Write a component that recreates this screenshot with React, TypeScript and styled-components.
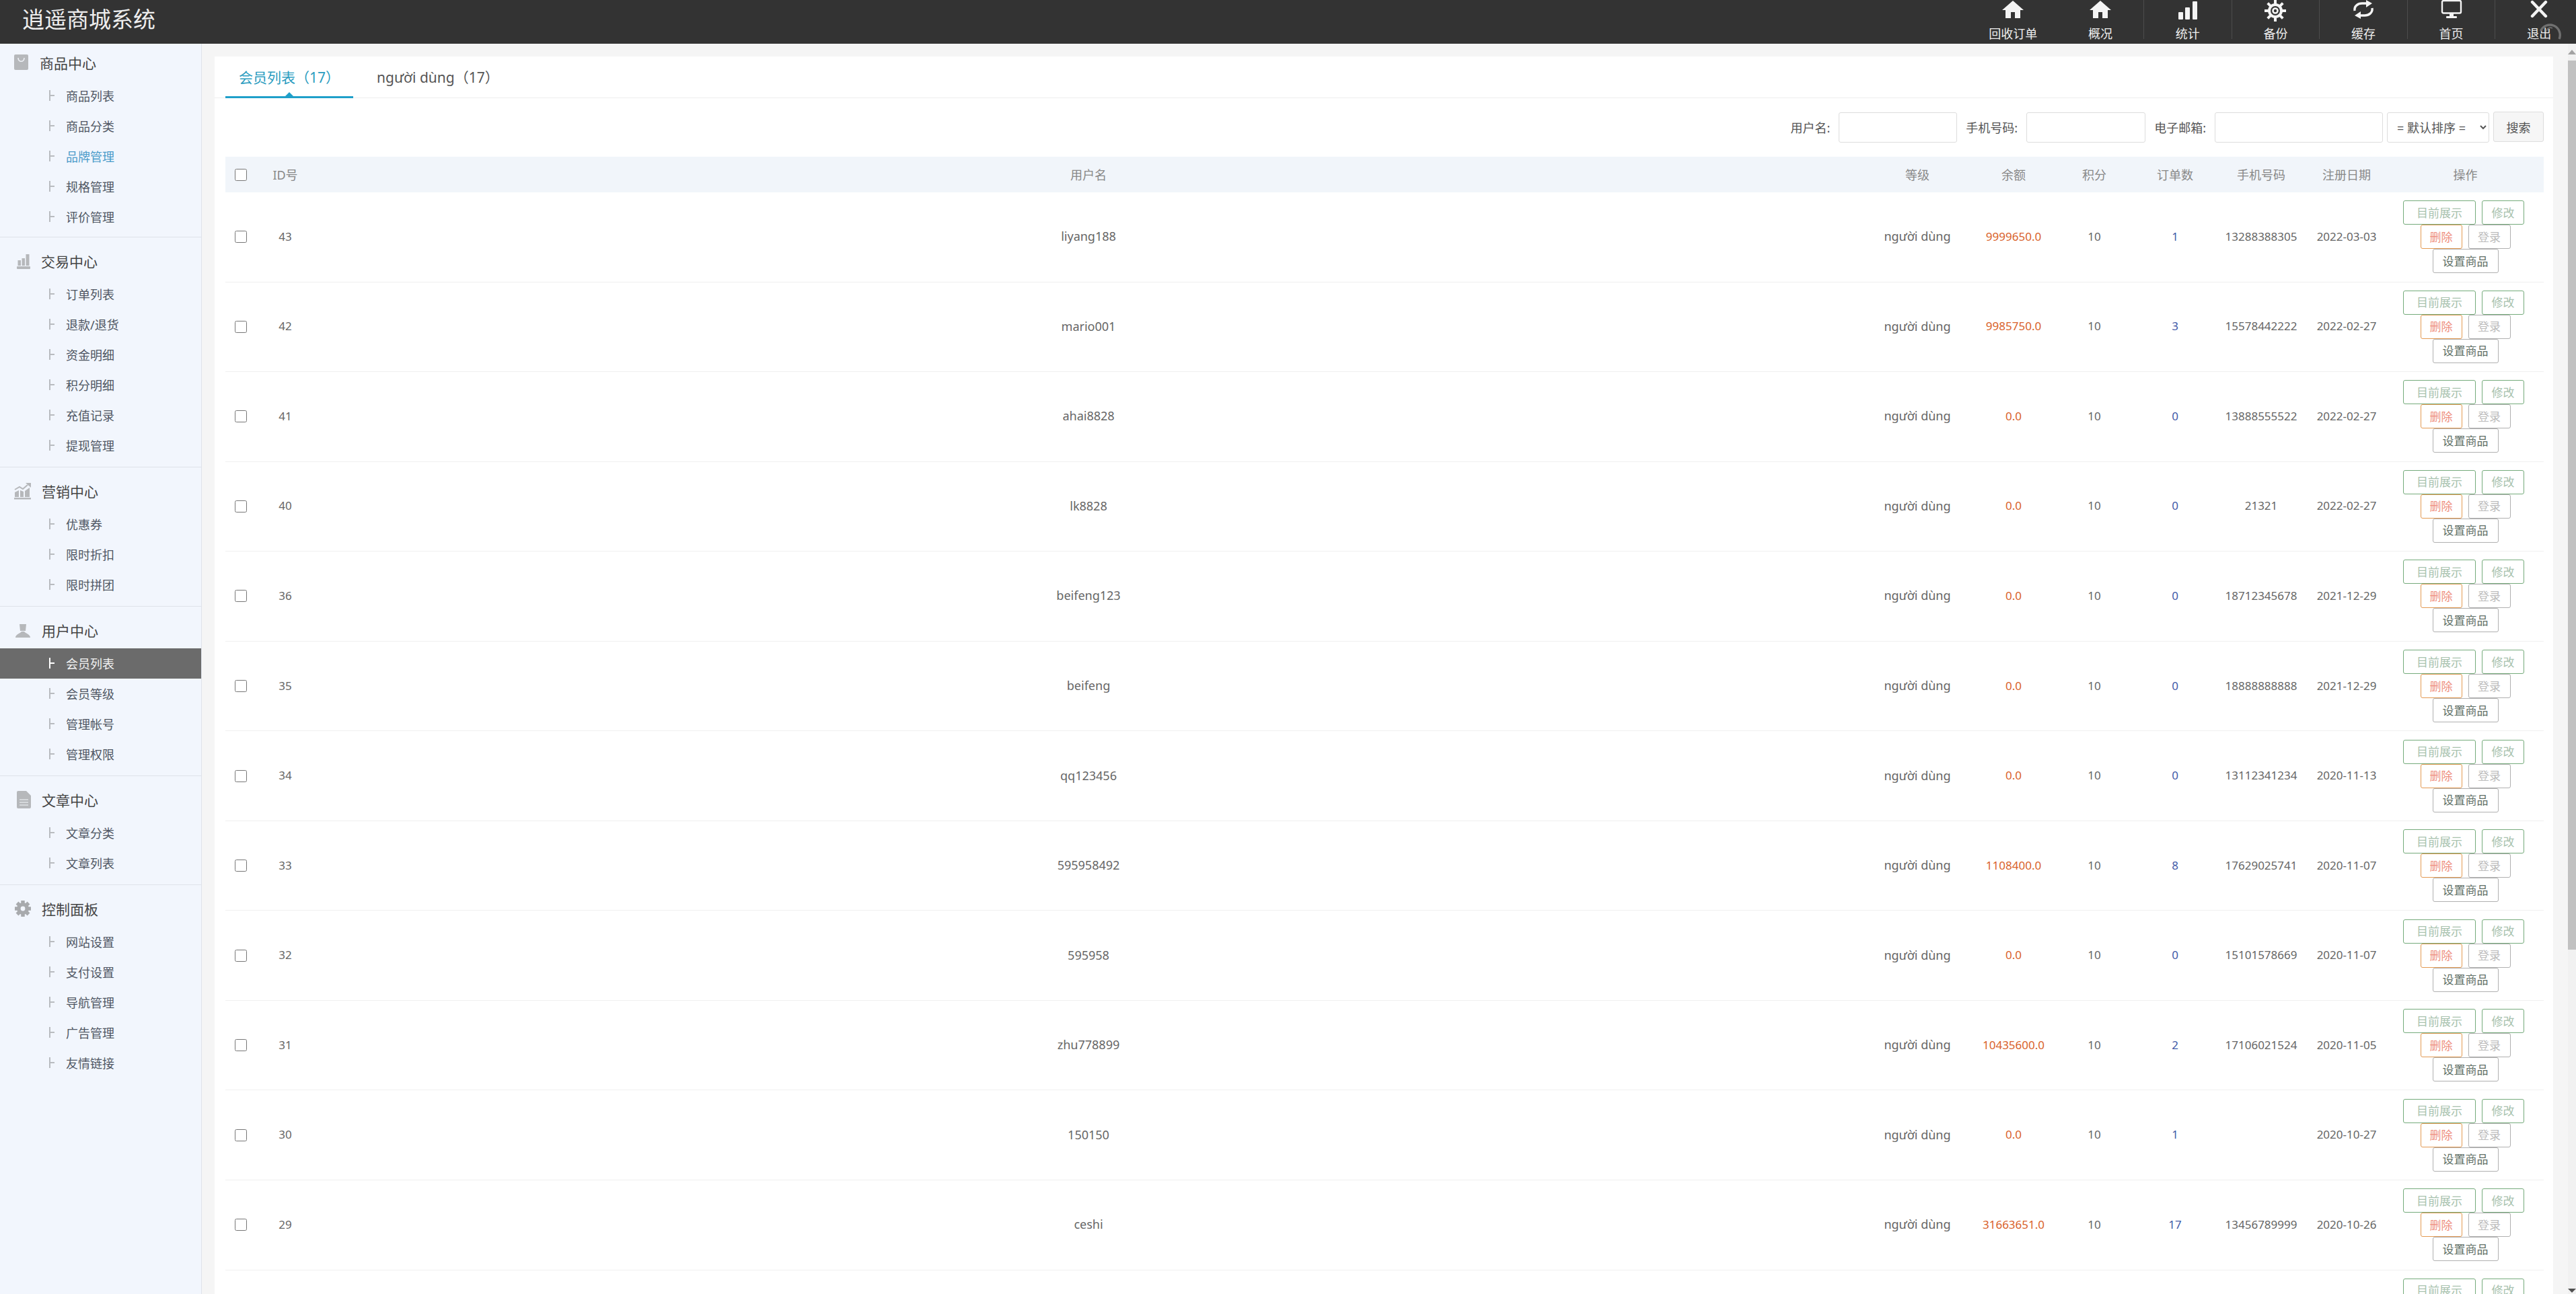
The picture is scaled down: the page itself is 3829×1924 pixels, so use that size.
import * as React from 'react';
import styled, { createGlobalStyle } from 'styled-components';

const fontStack = '"Noto Sans", "Noto Sans CJK SC", sans-serif';

const GlobalStyle = createGlobalStyle`
  html, body {
    margin: 0;
    height: 100%;
    overflow: hidden;
    background: #f5f5f5;
    font-family: ${fontStack};
  }
  * { box-sizing: border-box; }
`;

const Page = styled.div`
  display: flex;
  flex-direction: column;
  height: 100vh;
  overflow: hidden;
`;

const TopBar = styled.header`
  display: flex;
  flex: 0 0 65px;
  justify-content: space-between;
  background: #333;
  overflow: hidden;
`;

const Brand = styled.h1`
  margin: 0;
  padding: 4px 0 0 33px;
  color: #eee;
  font-size: 33px;
  font-weight: 400;
  line-height: 50px;
`;

const Nav = styled.nav`
  display: flex;
  align-items: flex-start;
  margin-right: -10px;
`;

const NavItem = styled.a<{ $divided?: boolean; $narrow?: boolean }>`
  position: relative;
  display: flex;
  flex-direction: column;
  align-items: center;
  width: ${(p) => (p.$narrow ? '129px' : '130.6px')};
  height: 58px;
  color: #eee;
  font-size: 18px;
  line-height: 24px;
  border-left: 1px solid ${(p) => (p.$divided ? '#4c4c4c' : 'transparent')};

  svg.nav-icon {
    flex: 0 0 32px;
    width: 34px;
    height: 32px;
    margin-bottom: 6px;
  }
`;

const Spinner = styled.svg`
  position: absolute;
  left: 64px;
  top: 32px;
  width: 36px;
  height: 36px;
`;

const Body = styled.div`
  display: flex;
  flex: 1;
  min-height: 0;
`;

const Sidebar = styled.aside`
  flex: 0 0 300px;
  background: #f2f6fd;
  border-right: 1px solid #dfe3ea;
`;

const Section = styled.section<{ $first?: boolean; $last?: boolean }>`
  padding: ${(p) => (p.$first ? '3px 0 7px' : '10px 0 9px')};
  border-bottom: ${(p) => (p.$last ? 'none' : '1px solid #dfe3ea')};
`;

const SectionTitle = styled.div<{ $gap: number }>`
  display: flex;
  align-items: center;
  gap: ${(p) => p.$gap}px;
  height: 52px;
  padding: 0 0 2px 21px;
  color: #444;
  font-size: 21px;

  svg {
    flex: 0 0 26px;
    width: 26px;
    height: 26px;
  }
`;

const TreeMark = styled.i`
  position: relative;
  display: block;
  flex: 0 0 8px;
  height: 16px;
  margin-right: 17px;
  border-left: 2px solid currentColor;

  &::after {
    content: '';
    position: absolute;
    left: 0;
    top: 7px;
    width: 6px;
    height: 2px;
    background: currentColor;
  }
`;

const MenuItem = styled.a<{ $active?: boolean; $accent?: boolean }>`
  display: flex;
  align-items: center;
  height: 45px;
  padding: 0 0 2px 73px;
  font-size: 18px;
  color: ${(p) => (p.$active ? '#f2f2f2' : p.$accent ? '#4a9bc9' : '#4f5663')};
  background: ${(p) => (p.$active ? '#6b6b6b' : 'transparent')};

  ${TreeMark} {
    color: ${(p) => (p.$active ? '#fff' : '#b9bcc0')};
  }
`;

const Main = styled.main`
  flex: 1;
  min-width: 0;
  padding: 19px 22px 0 19px;
  overflow: hidden;
`;

const Card = styled.div`
  background: #fff;
  min-height: 100%;
`;

const Tabs = styled.div`
  display: flex;
  height: 62px;
  padding-left: 16px;
  border-bottom: 1px solid #eee;
`;

const Tab = styled.a<{ $active?: boolean }>`
  position: relative;
  height: 62px;
  margin-right: 15px;
  padding: 14px 20px 0;
  font-size: 21px;
  line-height: 34px;
  color: ${(p) => (p.$active ? '#2a9cc0' : '#555')};
  border-bottom: 3px solid ${(p) => (p.$active ? '#1f9fc9' : 'transparent')};

  &::after {
    content: '';
    display: ${(p) => (p.$active ? 'block' : 'none')};
    position: absolute;
    left: 50%;
    bottom: 0;
    margin-left: -6px;
    border: 6px solid transparent;
    border-top: 0;
    border-bottom-color: #1f9fc9;
  }
`;

const Content = styled.div`
  padding: 21px 14px 0 16px;
`;

const FilterBar = styled.form`
  display: flex;
  justify-content: flex-end;
  align-items: center;
  height: 45px;
  margin-bottom: 21px;
  font-size: 18px;
  color: #555;
`;

const FilterLabel = styled.label`
  margin-right: 13px;
  padding-bottom: 2px;
`;

const TextInput = styled.input<{ $w: number }>`
  width: ${(p) => p.$w}px;
  height: 45px;
  margin-right: 13px;
  border: 1px solid #ddd;
  border-radius: 3px;
  background: #fff;
`;

const SortSelect = styled.select`
  width: 152px;
  height: 45px;
  margin: 0 6px 0 -7px;
  padding-left: 10px;
  border: 1px solid #ddd;
  border-radius: 3px;
  background: #fff;
  color: #555;
  font: 18px ${fontStack};
`;

const SearchButton = styled.button`
  width: 75px;
  height: 45px;
  margin-top: -2px;
  border: 1px solid #ddd;
  border-radius: 3px;
  background: #f6f6f6;
  color: #555;
  font: 18px ${fontStack};
`;

const gridColumns = '45px 88px 2300px 164px 122px 118px 122px 134px 120px 233px';

const HeadRow = styled.div`
  display: grid;
  grid-template-columns: ${gridColumns};
  align-items: center;
  justify-items: center;
  height: 53px;
  background: #f1f5fa;
  color: #888;
  font-size: 18px;

  span {
    padding-bottom: 2px;
  }
`;

const Row = styled.div`
  display: grid;
  grid-template-columns: ${gridColumns};
  align-items: center;
  justify-items: center;
  height: 133.55px;
  border-bottom: 1px solid #f0f0f0;
  color: #666;
  font-size: 17px;

  span {
    padding-bottom: 2px;
  }
`;

const NameCell = styled.span`
  font-size: 18px;
`;

const Check = styled.input.attrs({ type: 'checkbox' })`
  width: 18px;
  height: 18px;
  margin: 0;
`;

const Balance = styled.span`
  color: #d9622b;
`;

const Orders = styled.span`
  color: #3f5aa8;
`;

const Actions = styled.div`
  display: flex;
  flex-wrap: wrap;
  justify-content: center;
  column-gap: 9px;
  width: 100%;
`;

const toneStyles = {
  green: { border: '#75ab7b', color: '#a8c2ae' },
  orange: { border: '#e39a52', color: '#ee8f80' },
  gray: { border: '#b0b0b0', color: '#bcbcbc' },
  dark: { border: '#b0b0b0', color: '#5f6f66' }
};

const ActionButton = styled.button<{ $tone: keyof typeof toneStyles; $w: number; $trail?: boolean }>`
  width: ${(p) => p.$w}px;
  height: 36px;
  margin-right: ${(p) => (p.$trail ? '5px' : '0')};
  padding: 0 0 2px;
  background: #fff;
  border: 1px solid ${(p) => toneStyles[p.$tone].border};
  border-radius: 3px;
  color: ${(p) => toneStyles[p.$tone].color};
  font: 17px ${fontStack};
`;

const ScrollTrack = styled.div`
  display: flex;
  flex-direction: column;
  flex: 0 0 12px;
  background: #f1f1f1;
`;

const ScrollUp = styled.div`
  flex: 0 0 25px;
  display: flex;
  align-items: center;
  justify-content: center;

  &::before {
    content: '';
    border: 6px solid transparent;
    border-top: 0;
    border-bottom: 7px solid #a3a3a3;
  }
`;

const ScrollThumb = styled.div`
  flex: 0 0 1322px;
  background: #c1c1c1;
`;

const ScrollGap = styled.div`
  flex: 1;
`;

const ScrollDown = styled.div`
  flex: 0 0 10px;
  display: flex;
  align-items: center;
  justify-content: center;

  &::before {
    content: '';
    border: 6px solid transparent;
    border-bottom: 0;
    border-top: 6px solid #505050;
  }
`;

const ICON_GRAY = '#b6b8bb';

const BagIcon = () => (
  <svg viewBox="0 0 26 26">
    <rect x="0" y="1" width="21" height="23" rx="2" fill={ICON_GRAY} />
    <path d="M6 6c0 7 9 7 9 0" fill="none" stroke="#eef1f6" strokeWidth="1.6" />
  </svg>
);

const BarsIcon = () => (
  <svg viewBox="0 0 26 26" fill={ICON_GRAY}>
    <rect x="5.5" y="12" width="4.5" height="8" />
    <rect x="11.5" y="9" width="4.5" height="11" />
    <rect x="17.5" y="3" width="5" height="17" />
    <rect x="4" y="21" width="20" height="4" rx="1" />
  </svg>
);

const ChartIcon = () => (
  <svg viewBox="0 0 26 26" fill={ICON_GRAY}>
    <path d="M1 15l6-3v10H1zM9 12l5 2v8H9zM16 13l7-5v14h-7z" />
    <rect x="0" y="23" width="25" height="2.5" />
    <path d="M1 11l7-4 5 3 7-6" fill="none" stroke={ICON_GRAY} strokeWidth="2" />
    <path d="M17 1h8v7z" />
  </svg>
);

const PersonIcon = () => (
  <svg viewBox="0 0 26 26" fill={ICON_GRAY}>
    <path d="M8 4h10l-1 10h-8z" />
    <path d="M2 24c0-5 7-6 9-9h4c2 3 9 4 9 9z" />
  </svg>
);

const FileIcon = () => (
  <svg viewBox="0 0 26 26">
    <path
      d="M6 0h12l7 7v17a2 2 0 0 1-2 2H6a2 2 0 0 1-2-2V2a2 2 0 0 1 2-2z"
      fill={ICON_GRAY}
    />
    <path d="M8 13h13M8 17h13M8 21h13" stroke="#dfe2e6" strokeWidth="1.6" />
  </svg>
);

const GearIcon = ({ fill = '#a8aaad' }: { fill?: string }) => (
  <svg viewBox="0 0 26 26">
    <g stroke={fill} strokeWidth="5.5">
      <path d="M13 1v24M1 13h24M4.5 4.5l17 17M21.5 4.5l-17 17" />
    </g>
    <circle cx="13" cy="13" r="9" fill={fill} />
    <circle cx="13" cy="13" r="3.4" fill="#f2f6fd" />
  </svg>
);

const navIconColor = '#f4f4f4';

const HomeNavIcon = () => (
  <svg className="nav-icon" viewBox="0 0 34 32" fill={navIconColor}>
    <path d="M17 1l16 14h-5v12h-8v-9h-6v9H6V15H1z" />
  </svg>
);

const BarsNavIcon = () => (
  <svg className="nav-icon" viewBox="0 0 34 32" fill={navIconColor}>
    <rect x="3" y="18" width="7" height="11" rx="1" />
    <rect x="13" y="11" width="7" height="18" rx="1" />
    <rect x="24" y="2" width="7" height="27" rx="1" />
  </svg>
);

const GearNavIcon = () => (
  <svg className="nav-icon" viewBox="0 0 34 32">
    <g stroke={navIconColor} strokeWidth="4">
      <path d="M17 0v32M1 16h32M5.7 4.7l22.6 22.6M28.3 4.7L5.7 27.3" />
    </g>
    <circle cx="17" cy="16" r="11" fill={navIconColor} />
    <circle cx="17" cy="16" r="7" fill="#333" />
    <circle cx="17" cy="16" r="4.8" fill={navIconColor} />
    <circle cx="17" cy="16" r="2.2" fill="#333" />
  </svg>
);

const RefreshNavIcon = () => (
  <svg className="nav-icon" viewBox="0 0 34 32" fill={navIconColor}>
    <path
      d="M4 16C3 9 9 5 15 5h6M30 12c1 7-5 11-11 11h-6"
      fill="none"
      stroke={navIconColor}
      strokeWidth="3.4"
    />
    <path d="M21 0l9 5-9 6zM13 17l-9 6 9 5z" />
  </svg>
);

const MonitorNavIcon = () => (
  <svg className="nav-icon" viewBox="0 0 34 32" fill={navIconColor}>
    <rect x="3" y="1" width="28" height="18.5" rx="2" fill="none" stroke={navIconColor} strokeWidth="2.4" />
    <rect x="14" y="20" width="6" height="4" />
    <rect x="9" y="24" width="16" height="3" rx="1" />
  </svg>
);

const CloseNavIcon = () => (
  <svg className="nav-icon" viewBox="0 0 34 32">
    <path d="M7 3l20 21M27 3L7 24" stroke={navIconColor} strokeWidth="4.4" strokeLinecap="round" />
  </svg>
);

const navItems = [
  { label: '回收订单', icon: <HomeNavIcon /> },
  { label: '概况', icon: <HomeNavIcon />, narrow: true },
  { label: '统计', icon: <BarsNavIcon />, divided: true },
  { label: '备份', icon: <GearNavIcon />, divided: true },
  { label: '缓存', icon: <RefreshNavIcon />, divided: true },
  { label: '首页', icon: <MonitorNavIcon />, divided: true },
  { label: '退出', icon: <CloseNavIcon />, divided: true, spinner: true }
];

const menu = [
  { title: '商品中心', icon: <BagIcon />, gap: 12, items: ['商品列表', '商品分类', '品牌管理', '规格管理', '评价管理'] },
  { title: '交易中心', icon: <BarsIcon />, gap: 14, items: ['订单列表', '退款/退货', '资金明细', '积分明细', '充值记录', '提现管理'] },
  { title: '营销中心', icon: <ChartIcon />, gap: 15, items: ['优惠券', '限时折扣', '限时拼团'] },
  { title: '用户中心', icon: <PersonIcon />, gap: 15, items: ['会员列表', '会员等级', '管理帐号', '管理权限'] },
  { title: '文章中心', icon: <FileIcon />, gap: 15, items: ['文章分类', '文章列表'] },
  { title: '控制面板', icon: <GearIcon />, gap: 15, items: ['网站设置', '支付设置', '导航管理', '广告管理', '友情链接'] }
];

const members = [
  ['43', 'liyang188', '9999650.0', '1', '13288388305', '2022-03-03'],
  ['42', 'mario001', '9985750.0', '3', '15578442222', '2022-02-27'],
  ['41', 'ahai8828', '0.0', '0', '13888555522', '2022-02-27'],
  ['40', 'lk8828', '0.0', '0', '21321', '2022-02-27'],
  ['36', 'beifeng123', '0.0', '0', '18712345678', '2021-12-29'],
  ['35', 'beifeng', '0.0', '0', '18888888888', '2021-12-29'],
  ['34', 'qq123456', '0.0', '0', '13112341234', '2020-11-13'],
  ['33', '595958492', '1108400.0', '8', '17629025741', '2020-11-07'],
  ['32', '595958', '0.0', '0', '15101578669', '2020-11-07'],
  ['31', 'zhu778899', '10435600.0', '2', '17106021524', '2020-11-05'],
  ['30', '150150', '0.0', '1', '', '2020-10-27'],
  ['29', 'ceshi', '31663651.0', '17', '13456789999', '2020-10-26']
];

const RowActions = () => (
  <Actions>
    <ActionButton $tone="green" $w={108}>目前展示</ActionButton>
    <ActionButton $tone="green" $w={63} $trail>修改</ActionButton>
    <ActionButton $tone="orange" $w={62}>删除</ActionButton>
    <ActionButton $tone="gray" $w={63}>登录</ActionButton>
    <ActionButton $tone="dark" $w={98}>设置商品</ActionButton>
  </Actions>
);

export default function App(): JSX.Element {
  return (
    <Page>
      <GlobalStyle />
      <TopBar>
        <Brand>逍遥商城系统</Brand>
        <Nav>
          {navItems.map((item) => (
            <NavItem key={item.label} $divided={item.divided} $narrow={item.narrow}>
              {item.icon}
              {item.label}
              {item.spinner && (
                <Spinner viewBox="0 0 36 36" fill="none" stroke="#707070">
                  <path d="M3.5 14A15 15 0 1 1 31 26" strokeWidth="3.4" />
                  <path d="M12 15a6 6 0 0 1 9-5" strokeWidth="1.6" />
                </Spinner>
              )}
            </NavItem>
          ))}
        </Nav>
      </TopBar>
      <Body>
        <Sidebar>
          {menu.map((section, index) => (
            <Section key={section.title} $first={index === 0} $last={index === menu.length - 1}>
              <SectionTitle $gap={section.gap}>
                {section.icon}
                {section.title}
              </SectionTitle>
              {section.items.map((label) => (
                <MenuItem
                  key={label}
                  $active={label === '会员列表'}
                  $accent={label === '品牌管理'}
                >
                  <TreeMark />
                  {label}
                </MenuItem>
              ))}
            </Section>
          ))}
        </Sidebar>
        <Main>
          <Card>
            <Tabs>
              <Tab $active>会员列表（17）</Tab>
              <Tab>người dùng（17）</Tab>
            </Tabs>
            <Content>
              <FilterBar>
                <FilterLabel>用户名:</FilterLabel>
                <TextInput $w={176} />
                <FilterLabel>手机号码:</FilterLabel>
                <TextInput $w={177} />
                <FilterLabel>电子邮箱:</FilterLabel>
                <TextInput $w={250} />
                <SortSelect defaultValue="">
                  <option value="">= 默认排序 =</option>
                </SortSelect>
                <SearchButton type="button">搜索</SearchButton>
              </FilterBar>
              <HeadRow>
                <Check />
                <span>ID号</span>
                <span>用户名</span>
                <span>等级</span>
                <span>余额</span>
                <span>积分</span>
                <span>订单数</span>
                <span>手机号码</span>
                <span>注册日期</span>
                <span>操作</span>
              </HeadRow>
              {members.map(([id, name, balance, orders, phone, date]) => (
                <Row key={id}>
                  <Check />
                  <span>{id}</span>
                  <NameCell>{name}</NameCell>
                  <NameCell>người dùng</NameCell>
                  <Balance>{balance}</Balance>
                  <span>10</span>
                  <Orders>{orders}</Orders>
                  <span>{phone}</span>
                  <span>{date}</span>
                  <RowActions />
                </Row>
              ))}
              <Row>
                <Check />
                <span />
                <span />
                <span />
                <span />
                <span />
                <span />
                <span />
                <span />
                <RowActions />
              </Row>
            </Content>
          </Card>
        </Main>
        <ScrollTrack>
          <ScrollUp />
          <ScrollThumb />
          <ScrollGap />
          <ScrollDown />
        </ScrollTrack>
      </Body>
    </Page>
  );
}
